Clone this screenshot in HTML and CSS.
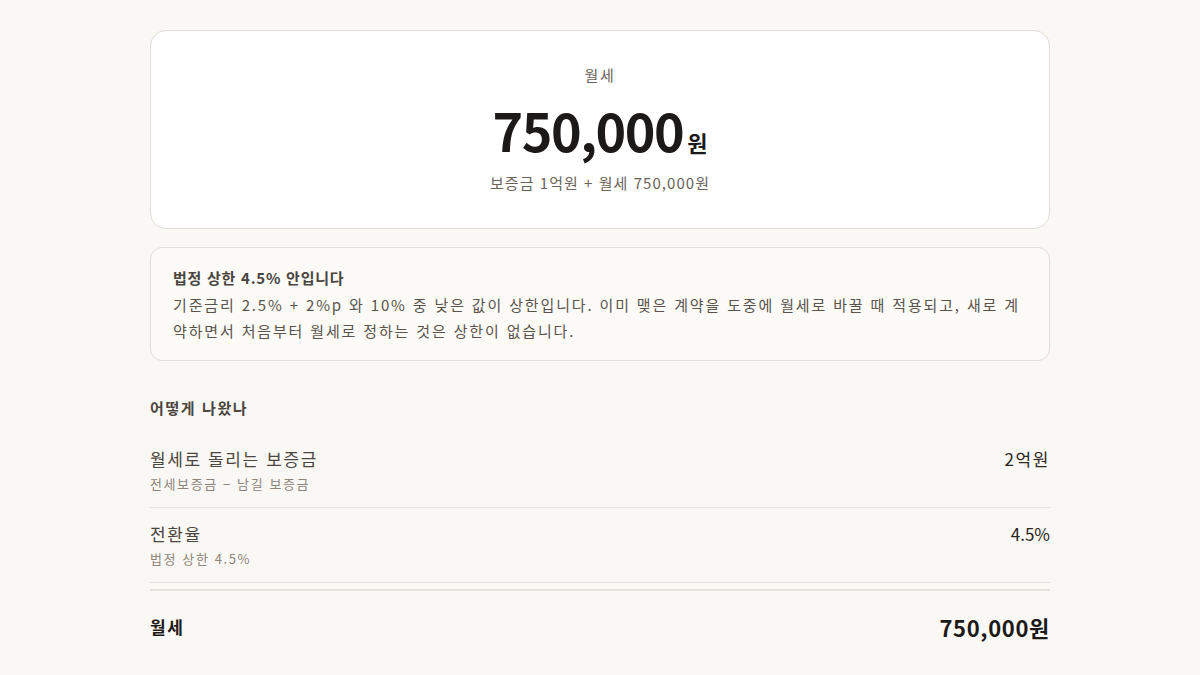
FILE: index.html
```html
<!DOCTYPE html>
<html lang="ko">
<head>
  <meta charset="UTF-8" />
  <meta name="viewport" content="width=device-width, initial-scale=1.0"/>
  <title>월세 계산</title>
  <link rel="stylesheet" href="styles.css">
</head>
<body>
  <div class="page">
    <!-- 결과 카드 -->
    <div class="result-card">
      <div class="result-label">월세</div>
      <div class="result-amount">750,000<span class="unit">원</span></div>
      <div class="result-sub">보증금 1억원 + 월세 750,000원</div>
    </div>

    <!-- 안내 -->
    <div class="notice">
      <div class="notice-title">법정 상한 4.5% 안입니다</div>
      <p class="notice-text">기준금리 2.5% + 2%p 와 10% 중 낮은 값이 상한입니다. 이미 맺은 계약을 도중에 월세로 바꿀 때 적용되고, 새로 계약하면서 처음부터 월세로 정하는 것은 상한이 없습니다.</p>
    </div>

    <!-- 계산 과정 -->
    <h3 class="section-title">어떻게 나왔나</h3>
    <div class="rows">
      <div class="row">
        <div class="row-left">
          <div class="row-label">월세로 돌리는 보증금</div>
          <div class="row-note">전세보증금 − 남길 보증금</div>
        </div>
        <div class="row-value">2억원</div>
      </div>
      <div class="row">
        <div class="row-left">
          <div class="row-label">전환율</div>
          <div class="row-note">법정 상한 4.5%</div>
        </div>
        <div class="row-value num">4.5%</div>
      </div>
      <div class="row total">
        <div class="row-label">월세</div>
        <div class="row-value">750,000원</div>
      </div>
    </div>
  </div>
</body>
</html>
```

FILE: styles.css
```css
html, body {
  margin: 0;
  padding: 0;
  background-color: #faf8f4;
  font-family: "Noto Sans CJK KR", "Noto Sans", sans-serif;
  color: #2a2622;
  letter-spacing: 0.1em;
}

.page {
  width: 900px;
  margin: 0 auto;
  padding-top: 30px;
}

.result-card {
  background: #fff;
  border: 1px solid #e2ddd5;
  border-radius: 16px;
  padding: 33px 24px 34px;
  text-align: center;
}

.result-label {
  font-size: 15px;
  line-height: 22px;
  color: #6b635a;
}

.result-amount {
  margin-top: 13px;
  height: 62px;
  font-size: 52px;
  line-height: 62px;
  font-weight: 700;
  color: #1c1a18;
  letter-spacing: -1.5px;
}

.result-amount .unit {
  font-size: 22px;
  line-height: 1;
  margin-left: 4px;
  letter-spacing: 0;
}

.result-sub {
  margin-top: 11px;
  font-size: 15px;
  line-height: 22px;
  color: #6b635a;
  letter-spacing: 0.07em;
}

.notice {
  margin-top: 18px;
  background: #fcfbf8;
  border: 1px solid #e2ddd5;
  border-radius: 12px;
  padding: 18px 22px 16px;
}

.notice-title {
  font-size: 15px;
  line-height: 24px;
  font-weight: 700;
  color: #4a4540;
  letter-spacing: 0.05em;
}

.notice-text {
  margin: 2px 0 0;
  font-size: 15px;
  line-height: 26px;
  color: #5a534b;
  letter-spacing: 1.85px;
}

.section-title {
  margin: 36px 0 0;
  font-size: 15px;
  line-height: 22px;
  font-weight: 700;
  color: #4a4540;
}

.rows {
  margin-top: 14px;
}

.row {
  display: flex;
  justify-content: space-between;
  align-items: flex-start;
  padding: 14px 0 13px;
  border-bottom: 1px solid #e6e1da;
}

.row-label {
  font-size: 17px;
  line-height: 24px;
  color: #4a4540;
}

.row-note {
  margin-top: 3px;
  font-size: 13px;
  line-height: 20px;
  color: #8c847a;
}

.row-value {
  font-size: 17px;
  line-height: 24px;
  color: #2a2622;
}

.row-value.num {
  letter-spacing: 0;
}

.row.total {
  margin-top: 6px;
  border-top: 2px solid #e6e1da;
  border-bottom: none;
  padding-top: 21px;
  align-items: center;
}

.row.total .row-label {
  font-weight: 700;
  color: #1c1a18;
}

.row.total .row-value {
  font-size: 22px;
  line-height: 30px;
  font-weight: 700;
  color: #1c1a18;
  letter-spacing: 0.03em;
}
```
